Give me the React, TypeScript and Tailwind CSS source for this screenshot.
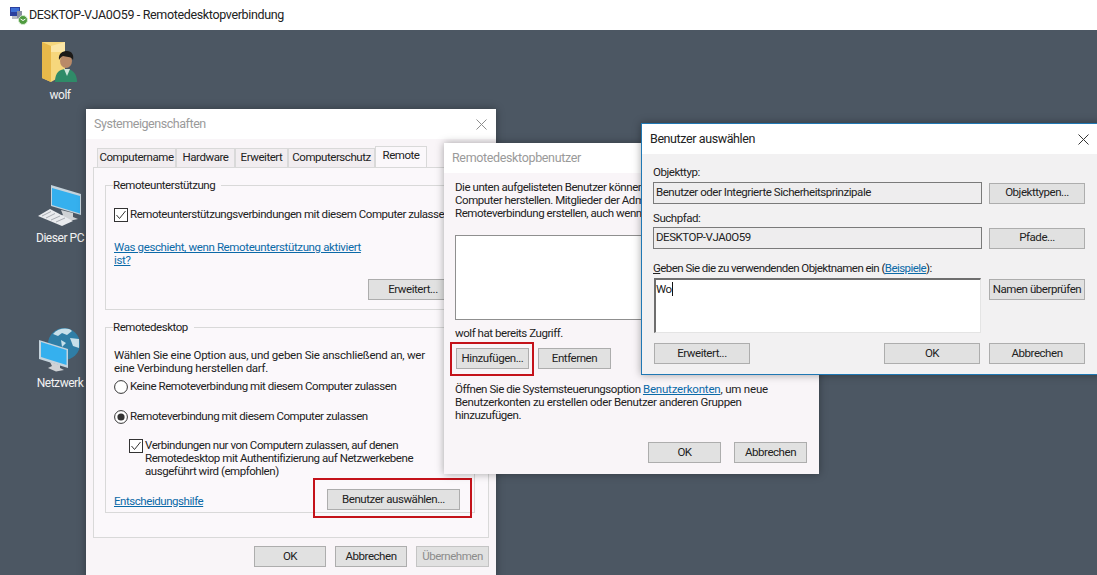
import type { ReactNode } from "react";

const Btn = ({ children, className = "", disabled = false }: { children: ReactNode; className?: string; disabled?: boolean }) => (
  <div
    className={`flex h-[21px] shrink-0 items-center justify-center whitespace-nowrap border bg-[#e1e1e1] ${
      disabled ? "border-[#c4c4c4] bg-[#d0cfd0] text-[#8c8c8c]" : "border-[#adadad]"
    } ${className}`}
  >
    {children}
  </div>
);

const Check = () => (
  <svg width="14" height="14" viewBox="0 0 14 14" className="shrink-0">
    <rect x="0.5" y="0.5" width="13" height="13" fill="#fff" stroke="#333" />
    <path d="M2.5 7 L5.5 10.5 L11.5 3" fill="none" stroke="#333" strokeWidth="1" />
  </svg>
);

const Radio = ({ on = false }: { on?: boolean }) => (
  <svg width="14" height="14" viewBox="0 0 14 14" className="shrink-0">
    <circle cx="7" cy="7" r="6.4" fill="#fff" stroke="#333" />
    {on && <circle cx="7" cy="7" r="3.6" fill="#333" />}
  </svg>
);

const Tab = ({ label, active = false, w }: { label: string; active?: boolean; w: string }) => (
  <div
    className={`flex items-center justify-center border border-[#d9d9d9] ${w} ${
      active ? "z-10 -mb-px h-[21px] border-b-0 bg-[#fbf8fb] pb-[3px]" : "mt-[2px] h-[19px] border-b-0 bg-[#f1edf0]"
    }`}
  >
    {label}
  </div>
);

const Group = ({ title, className, children }: { title: string; className: string; children: ReactNode }) => (
  <fieldset className={`border border-[#d9d9d9] px-2 ${className}`}>
    <legend className="ml-[-1px] pr-[6px] leading-[16px]">{title}</legend>
    {children}
  </fieldset>
);

const TitleIcon = () => (
  <svg width="20" height="20" viewBox="0 0 20 20" className="shrink-0">
    <rect x="1" y="2" width="10" height="9" fill="#2b3f9e" />
    <rect x="2" y="3" width="8" height="4" fill="#3d6fd6" />
    <rect x="3" y="11" width="10" height="3" fill="#b9bcc4" />
    <rect x="8" y="6" width="5" height="7" fill="#8a8fa0" />
    <circle cx="14" cy="15" r="4.5" fill="#4f9b3f" stroke="#d5ead0" />
    <path d="M11.5 14 L14 15.5 L16.5 14" fill="none" stroke="#fff" />
  </svg>
);

const FolderUser = () => (
  <svg width="38" height="44" viewBox="0 0 38 44">
    <path d="M1 2 H24 V34 L10 42 L1 38 Z" fill="#f6d77c" />
    <path d="M1 2 L10 6 V42 L1 38 Z" fill="#e8b94a" />
    <path d="M10 6 L24 2 V12 H10 Z" fill="#fbe6a6" />
    <path d="M14 42 C14 32 19 29 25 29 C31 29 36 33 36 42 Z" fill="#2f8b68" />
    <path d="M23 29 L26 36 L29 29 Z" fill="#cfe6da" />
    <ellipse cx="25" cy="21" rx="6" ry="7" fill="#b98a68" />
    <path d="M18 20 C17 13 22 11 26 11 C31 11 33 15 32 20 C30 16 25 17 22 16 C20 17 19 18 18 20 Z" fill="#1c1a18" />
  </svg>
);

const PcIcon = () => (
  <svg width="46" height="42" viewBox="0 0 46 42">
    <path d="M14 0 L44 9 V30 L14 21 Z" fill="#c5d3dc" />
    <path d="M15 3 L43 11 V28.500 L15 20 Z" fill="#35b0ee" />
    <path d="M24 25 L36 28 V32 L41 34 L32 36 L21 32 L26 30 Z" fill="#cfd2d5" />
    <path d="M1 31 L13 24 L36 36 L25 41 Z" fill="#e9ebee" />
    <path d="M5 31 L14 26.500 M9 33 L18 28.500 M14 35 L23 31 M19 37 L28 33" stroke="#a9adb3" strokeWidth="1" />
  </svg>
);

const NetIcon = () => (
  <svg width="44" height="46" viewBox="0 0 44 46">
    <circle cx="26" cy="18" r="16" fill="#2f7ea6" />
    <path d="M15 8 C20 2 30 1 34 5 L29 9 L24 7 L20 10 Z M32 12 L41 13 L41 22 L35 20 Z M23 14 L28 17 L24 21 Z" fill="#c7e0ea" />
    <path d="M1 14 L30 23 V42 L1 33 Z" fill="#c5d3dc" />
    <path d="M3 16 L28.500 24 V39 L3 31 Z" fill="#35b0ee" />
    <path d="M12 36 L22 39 V42 L26 44 L18 45.500 L10 42 L14 40 Z" fill="#cfd2d5" />
  </svg>
);

const DesktopIcon = ({ label, children, className }: { label: string; children: ReactNode; className: string }) => (
  <div className={`absolute flex w-[76px] flex-col items-center text-[12px] text-[#f2f2f2] ${className}`}>
    {children}
    <span className="mt-[3px] leading-[16px]">{label}</span>
  </div>
);

const linkCls = "text-[#0b6aa8] underline";

export default function App() {
  return (
    <div className="flex h-[575px] w-[1097px] flex-col overflow-hidden bg-white font-['Roboto',sans-serif] text-[11.5px] tracking-[-0.45px] text-[#222]">
      <div className="flex h-[30px] shrink-0 items-center pl-[9px] text-[12.5px] tracking-[-0.35px]">
        <TitleIcon />
        <span>DESKTOP-VJA0O59 - Remotedesktopverbindung</span>
      </div>

      <div className="relative flex-1 bg-[#4c5763]">
        <DesktopIcon label="wolf" className="left-[22px] top-[10px]">
          <FolderUser />
        </DesktopIcon>
        <DesktopIcon label="Dieser PC" className="left-[22px] top-[155px]">
          <PcIcon />
        </DesktopIcon>
        <DesktopIcon label="Netzwerk" className="left-[22px] top-[296px]">
          <NetIcon />
        </DesktopIcon>

        {/* Systemeigenschaften */}
        <div className="absolute left-[86px] top-[79px] flex h-[470px] w-[410px] flex-col bg-[#f9f5f8] shadow-[0_0_8px_rgba(0,0,0,0.35)]">
          <div className="flex h-[30px] shrink-0 items-center justify-between bg-white pl-2 pr-[9px] text-[12.5px] tracking-[-0.45px] text-[#9a9a9a]">
            <span>Systemeigenschaften</span>
            <svg width="11" height="11" viewBox="0 0 11 11">
              <path d="M0.500 0.500 L10.500 10.500 M10.500 0.500 L0.500 10.500" stroke="#8d8d8d" />
            </svg>
          </div>
          <div className="mt-[7px] flex pl-[11px]">
            <Tab label="Computername" w="w-[79px]" />
            <Tab label="Hardware" w="w-[59px]" />
            <Tab label="Erweitert" w="w-[53px]" />
            <Tab label="Computerschutz" w="w-[87px]" />
            <Tab label="Remote" active w="w-[52px]" />
          </div>
          <div className="mx-[7px] flex h-[371px] flex-col border border-[#d9d9d9] bg-[#fbf8fb] px-[11px] pt-[9px]">
            <Group title="Remoteunterstützung" className="h-[133px] w-[370px]">
              <div className="mt-[13px] flex items-center gap-[2px] whitespace-nowrap">
                <Check />
                <span>Remoteunterstützungsverbindungen mit diesem Computer zulassen</span>
              </div>
              <div className={`mt-[18px] leading-[13px] tracking-[-0.37px] ${linkCls}`}>
                Was geschieht, wenn Remoteunterstützung aktiviert
                <br />
                ist?
              </div>
              <div className="mt-[12px] flex justify-end pr-2">
                <Btn className="w-[90px]">Erweitert...</Btn>
              </div>
            </Group>
            <Group title="Remotedesktop" className="mt-[9px] h-[194px] w-[370px]">
              <div className="mt-[14px] leading-[13px] tracking-[-0.25px]">
                Wählen Sie eine Option aus, und geben Sie anschließend an, wer
                <br />
                eine Verbindung herstellen darf.
              </div>
              <div className="mt-[3px] flex items-center gap-[2px]">
                <Radio />
                <span>Keine Remoteverbindung mit diesem Computer zulassen</span>
              </div>
              <div className="mt-[13px] flex items-center gap-[2px]">
                <Radio on />
                <span>Remoteverbindung mit diesem Computer zulassen</span>
              </div>
              <div className="ml-[15px] mt-[13px] flex items-start gap-[2px] leading-[13px]">
                <Check />
                <span>
                  Verbindungen nur von Computern zulassen, auf denen
                  <br />
                  Remotedesktop mit Authentifizierung auf Netzwerkebene
                  <br />
                  ausgeführt wird (empfohlen)
                </span>
              </div>
              <div className="mt-[11px] flex items-center justify-between pr-[6px]">
                <span className={`mt-[4px] ${linkCls}`}>Entscheidungshilfe</span>
                <div className="relative">
                  <Btn className="w-[133px]">Benutzer auswählen...</Btn>
                  <div className="absolute -bottom-[8px] -left-[14px] -right-[12px] -top-[11px] border-2 border-[#c4121a]" />
                </div>
              </div>
            </Group>
          </div>
          <div className="mt-[8px] flex gap-[9px] self-end pr-[7px]">
            <Btn className="w-[72px]">OK</Btn>
            <Btn className="w-[72px]">Abbrechen</Btn>
            <Btn disabled className="w-[73px]">Übernehmen</Btn>
          </div>
        </div>

        {/* Remotedesktopbenutzer */}
        <div className="absolute left-[444px] top-[113px] flex h-[331px] w-[375px] flex-col bg-[#f9f5f8] shadow-[0_0_8px_rgba(0,0,0,0.35)]">
          <div className="flex h-[30px] shrink-0 items-center bg-white pl-2 text-[12.5px] tracking-[-0.35px] text-[#9a9a9a]">
            Remotedesktopbenutzer
          </div>
          <div className="flex flex-1 flex-col px-[11px]">
            <div className="mt-[8px] w-[186px] overflow-hidden whitespace-nowrap leading-[13px]">
              Die unten aufgelisteten Benutzer können
              <br />
              Computer herstellen. Mitglieder der Administratoren
              <br />
              Remoteverbindung erstellen, auch wenn
            </div>
            <div className="mt-[15px] h-[85px] w-[352px] border border-[#8f8f8f] bg-white" />
            <div className="mt-[6px] leading-[14px]">wolf hat bereits Zugriff.</div>
            <div className="ml-px mt-[8px] flex gap-[9px]">
              <div className="relative">
                <Btn className="w-[73px]">Hinzufügen...</Btn>
                <div className="absolute -bottom-[7px] -left-[6px] -right-[5px] -top-[6px] border-2 border-[#c4121a]" />
              </div>
              <Btn className="w-[73px]">Entfernen</Btn>
            </div>
            <div className="mt-[14px] leading-[13px]">
              Öffnen Sie die Systemsteuerungsoption <span className={`tracking-[-0.2px] ${linkCls}`}>Benutzerkonten</span>
              <span className="tracking-[-0.2px]">, um neue</span>
              <br />
              <span className="tracking-[-0.35px]">Benutzerkonten zu erstellen oder Benutzer anderen Gruppen</span>
              <br />
              hinzuzufügen.
            </div>
            <div className="mt-[20px] flex justify-end gap-[13px] pr-px">
              <Btn className="w-[73px]">OK</Btn>
              <Btn className="w-[73px]">Abbrechen</Btn>
            </div>
          </div>
        </div>

        {/* Benutzer auswählen */}
        <div className="absolute left-[641px] top-[93px] flex h-[252px] w-[462px] flex-col border border-[#1f78b4] bg-[#f2f1f2] shadow-[0_0_8px_rgba(0,0,0,0.35)]">
          <div className="flex h-[30px] shrink-0 items-center justify-between bg-white pl-2 pr-[13px] text-[12.5px] tracking-[-0.4px]">
            <span>Benutzer auswählen</span>
            <svg width="11" height="11" viewBox="0 0 11 11">
              <path d="M0.500 0.500 L10.500 10.500 M10.500 0.500 L0.500 10.500" stroke="#333" />
            </svg>
          </div>
          <div className="flex flex-col pl-[11px]">
            <div className="mt-[11px] leading-[14px]">Objekttyp:</div>
            <div className="mt-[3px] flex items-center gap-[7px]">
              <div className="flex h-[22px] w-[329px] items-center border border-[#7a7a7a] bg-[#eeedee] pl-[2px]">
                Benutzer oder Integrierte Sicherheitsprinzipale
              </div>
              <Btn className="w-[96px]">Objekttypen...</Btn>
            </div>
            <div className="mt-[7px] leading-[14px]">Suchpfad:</div>
            <div className="mt-[2px] flex items-center gap-[7px]">
              <div className="flex h-[22px] w-[329px] items-center border border-[#7a7a7a] bg-[#eeedee] pl-[2px]">
                DESKTOP-VJA0O59
              </div>
              <Btn className="w-[96px]">Pfade...</Btn>
            </div>
            <div className="mt-[12px] leading-[14px] tracking-[-0.55px]">
              <u>G</u>eben Sie die zu verwendenden Objektnamen ein (<span className={linkCls}>Beispiele</span>):
            </div>
            <div className="mt-[3px] flex items-start gap-[8px]">
              <div className="ml-px h-[55px] w-[327px] border border-b-[#e4e4e4] border-l-2 border-r-[#e4e4e4] border-t-2 border-l-[#6e6e6e] border-t-[#6e6e6e] bg-white pt-[2px] leading-[14px]">
                Wo<span className="border-r border-[#111]" />
              </div>
              <Btn className="mt-px w-[96px]">Namen überprüfen</Btn>
            </div>
            <div className="ml-px mt-[10px] flex">
              <Btn className="w-[96px]">Erweitert...</Btn>
              <Btn className="ml-[134px] w-[96px]">OK</Btn>
              <Btn className="ml-[9px] w-[96px]">Abbrechen</Btn>
            </div>
          </div>
        </div>
      </div>
    </div>
  );
}
